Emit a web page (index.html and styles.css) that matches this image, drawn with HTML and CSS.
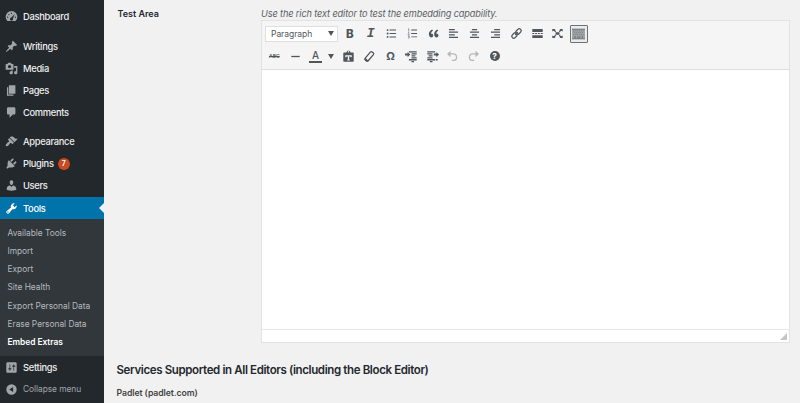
FILE: index.html
```html
<!DOCTYPE html>
<html lang="en">
<head>
<meta charset="utf-8">
<title>Embed Extras</title>
<link rel="stylesheet" href="styles.css">
</head>
<body>
<div class="layout">
<nav class="sidebar">
  <a class="item"><svg viewBox="0 0 20 20"><path fill-rule="evenodd" d="M3.8 17h12.4A9 9 0 1 0 3.8 17zM10 4a1 1 0 1 1 0 2 1 1 0 0 1 0-2zM6 6a1 1 0 1 1 0 2 1 1 0 0 1 0-2zm9 0-2.8 7.1a2.3 2.3 0 1 1-2.4-1.4zM4 10a1 1 0 1 1 0 2 1 1 0 0 1 0-2zm12 0a1 1 0 1 1 0 2 1 1 0 0 1 0-2z"/></svg><span>Dashboard</span></a>
  <a class="item gap"><svg viewBox="0 0 20 20"><path d="M10.44 3.02l1.82-1.82 6.36 6.35-1.83 1.82c-1.05-.68-2.48-.57-3.41.36l-.75.75c-.92.93-1.04 2.35-.35 3.41l-1.83 1.82-2.41-2.41-2.8 2.79c-.42.42-3.38 2.71-3.8 2.29s1.86-3.39 2.28-3.81l2.79-2.79L4.1 9.36l1.83-1.82c1.05.69 2.48.57 3.4-.36l.75-.75c.93-.92 1.05-2.35.36-3.41z"/></svg><span>Writings</span></a>
  <a class="item"><svg viewBox="0 0 20 20"><path d="M13 11V4c0-.55-.45-1-1-1h-1.67L9 1H5L3.67 3H2c-.55 0-1 .45-1 1v7c0 .55.45 1 1 1h10c.55 0 1-.45 1-1zM7 4.5c1.38 0 2.5 1.12 2.5 2.5S8.38 9.5 7 9.5 4.5 8.38 4.5 7 5.62 4.5 7 4.5zM14 6h5v10.5c0 1.38-1.12 2.5-2.5 2.5S14 17.88 14 16.5s1.12-2.5 2.5-2.5c.17 0 .34.02.5.05V9h-3V6zm-4 8.05V13h2v3.5c0 1.38-1.12 2.5-2.5 2.5S7 17.88 7 16.5 8.12 14 9.5 14c.17 0 .34.02.5.05z" fill-rule="evenodd"/></svg><span>Media</span></a>
  <a class="item"><svg viewBox="0 0 20 20"><path d="M6 15V2h10v13H6zm-1 1h8v2H3V5h2v11z"/></svg><span>Pages</span></a>
  <a class="item"><svg viewBox="0 0 20 20"><path d="M5 2h9c1.1 0 2 .9 2 2v7c0 1.1-.9 2-2 2h-2l-5 5v-5H5c-1.1 0-2-.9-2-2V4c0-1.1.9-2 2-2z"/></svg><span>Comments</span></a>
  <a class="item gap"><svg viewBox="0 0 20 20"><path d="M14.48 11.06L7.41 3.99l1.5-1.5c.5-.56 2.3-.47 3.51.32 1.21.8 1.43 1.28 2.91 2.1 1.18.64 2.45 1.26 4.45.85zm-.71.71L6.7 4.7 4.93 6.47c-.39.39-.39 1.02 0 1.41l1.06 1.06c.39.39.39 1.03 0 1.42-.6.6-1.43 1.11-2.21 1.69-.35.26-.7.53-1.01.84C1.43 14.23.4 16.08 1.4 17.07c.99 1 2.84-.03 4.18-1.36.31-.31.58-.66.85-1.02.57-.78 1.08-1.61 1.69-2.21.39-.39 1.02-.39 1.41 0l1.06 1.06c.39.39 1.02.39 1.41 0z"/></svg><span>Appearance</span></a>
  <a class="item"><svg viewBox="0 0 20 20"><path d="M13.11 4.36L9.87 7.6 8 5.73l3.24-3.24c.35-.34 1.05-.2 1.56.32.52.51.66 1.21.31 1.55zm-8 1.77l.91-1.12 9.01 9.01-1.19.84c-.71.71-2.63 1.16-3.82 1.16H6.14L4.9 17.26c-.59.59-1.54.59-2.12 0-.59-.58-.59-1.53 0-2.12l1.24-1.24v-3.88c0-1.13.4-3.19 1.09-3.89zm7.26 3.97l3.24-3.24c.34-.35 1.04-.21 1.55.31.52.51.66 1.21.31 1.55l-3.24 3.25z"/></svg><span>Plugins</span><b class="badge">7</b></a>
  <a class="item"><svg viewBox="0 0 20 20"><path d="M10 9.25c-2.27 0-2.73-3.44-2.73-3.44C7 4.02 7.82 2 9.97 2c2.16 0 2.98 2.02 2.71 3.81 0 0-.41 3.44-2.68 3.44zm0 2.57L12.72 10c2.39 0 4.52 2.33 4.52 4.53v2.49s-3.65 1.13-7.24 1.13c-3.65 0-7.24-1.13-7.24-1.13v-2.49c0-2.25 1.94-4.48 4.47-4.48z"/></svg><span>Users</span></a>
  <a class="item active"><svg viewBox="0 0 20 20"><path fill-rule="evenodd" d="M16.68 9.77c-1.34 1.34-3.3 1.67-4.95.99l-5.41 6.52c-.99.99-2.59.99-3.58 0s-.99-2.59 0-3.57l6.52-5.42c-.68-1.65-.35-3.61.99-4.95 1.28-1.28 3.12-1.62 4.72-1.06l-2.89 2.89 2.82 2.82 2.86-2.87c.53 1.58.18 3.39-1.08 4.65zM3.81 16.21c.4.39 1.04.39 1.43 0 .4-.4.4-1.04 0-1.43-.39-.4-1.03-.4-1.43 0-.39.39-.39 1.03 0 1.43z"/></svg><span>Tools</span></a>
  <div class="submenu">
    <a>Available Tools</a><a>Import</a><a>Export</a><a>Site Health</a><a>Export Personal Data</a><a>Erase Personal Data</a><a class="current">Embed Extras</a>
  </div>
  <a class="item"><svg viewBox="0 0 20 20"><path fill-rule="evenodd" d="M18 16V4c0-1.1-.9-2-2-2H4c-1.1 0-2 .9-2 2v12c0 1.1.9 2 2 2h12c1.1 0 2-.9 2-2zM8 11h1c.55 0 1 .45 1 1s-.45 1-1 1H8v1.5c0 .28-.22.5-.5.5s-.5-.22-.5-.5V13H6c-.55 0-1-.45-1-1s.45-1 1-1h1V5.500c0-.28.22-.5.5-.5s.5.22.5.5V11zm5-2h-1c-.55 0-1-.45-1-1s.45-1 1-1h1V5.500c0-.28.22-.5.5-.5s.5.22.5.5V7h1c.55 0 1 .45 1 1s-.45 1-1 1h-1v5.500c0 .28-.22.5-.5.5s-.5-.22-.5-.5V9z"/></svg><span>Settings</span></a>
  <a class="item collapse"><svg viewBox="0 0 20 20"><path fill-rule="evenodd" d="M10 2a8 8 0 1 1 0 16 8 8 0 0 1 0-16zm2.500 4L6.500 10l6 4z"/></svg><span>Collapse menu</span></a>
</nav>
<main class="content">
  <section class="field">
    <h4 class="label">Test Area</h4>
    <div class="control">
      <p class="hint">Use the rich text editor to test the embedding capability.</p>
      <div class="editor">
        <div class="toolbar">
          <div class="tools">
            <div class="select"><span>Paragraph</span><i class="caret"></i></div>
            <span class="btn bold">B</span>
            <span class="btn italic">I</span>
            <span class="btn"><svg viewBox="0 0 20 20"><path d="M7 4h10v1.500H7zM7 9.200h10v1.500H7zM7 14.500h10V16H7z"/><circle cx="4" cy="4.800" r="1.500"/><circle cx="4" cy="10" r="1.500"/><circle cx="4" cy="15.200" r="1.500"/></svg></span>
            <span class="btn"><svg viewBox="0 0 20 20"><path d="M8 4h9v1.300H8zM8 9.300h9v1.300H8zM8 14.600h9v1.300H8z"/><path class="line thin" d="M3 3.500l1.300-.8V7M3 9c1-1.200 2.500-.2 1.500 1L3 12h2.500M3 14h2.200L4 15.400c2 0 1.600 2.300-1 1.700"/></svg></span>
            <span class="btn"><svg viewBox="0 0 20 20"><path d="M9.490 13.220c0-.74-.2-1.380-.61-1.900-.62-.78-1.830-.88-2.530-.72-.29-1.650 1.110-3.750 2.920-4.650L7.880 4c-2.730 1.300-5.420 4.280-4.960 8.050C3.210 14.430 4.590 16 6.540 16c.85 0 1.560-.25 2.120-.75s.83-1.180.83-2.030zm8.050 0c0-.74-.2-1.380-.61-1.900-.63-.78-1.830-.88-2.530-.72-.29-1.650 1.110-3.750 2.920-4.650L15.930 4c-2.730 1.300-5.410 4.280-4.950 8.050.29 2.380 1.660 3.950 3.610 3.950.85 0 1.560-.25 2.120-.75s.83-1.180.83-2.030z"/></svg></span>
            <span class="btn"><svg viewBox="0 0 20 20"><path d="M3 3h9v2H3zM3 7h14v2H3zM3 11h9v2H3zM3 15h14v2H3z"/></svg></span>
            <span class="btn"><svg viewBox="0 0 20 20"><path d="M6 3h8v2H6zM3 7h14v2H3zM6 11h8v2H6zM3 15h14v2H3z"/></svg></span>
            <span class="btn"><svg viewBox="0 0 20 20"><path d="M8 3h9v2H8zM3 7h14v2H3zM8 11h9v2H8zM3 15h14v2H3z"/></svg></span>
            <span class="btn"><svg viewBox="0 0 20 20"><g class="line" transform="rotate(-45 10 10)"><rect x="1" y="7" width="9.500" height="6" rx="3"/><rect x="9.500" y="7" width="9.500" height="6" rx="3"/><path d="M7 10h6"/></g></svg></span>
            <span class="btn"><svg viewBox="0 0 20 20"><path d="M2 3h16v4.500H2zM2 12.500h16V17H2zM2 9.200h3v1.600H2zM6.300 9.200h3v1.600h-3zM10.600 9.200h3v1.600h-3zM15 9.200h3v1.600h-3z"/></svg></span>
            <span class="btn"><svg viewBox="0 0 20 20"><path d="M7 8h6v4H7z"/><path d="M2 3h5L5.700 4.300 8 6.600 6.600 8 4.300 5.700 2 7zM18 3h-5l1.300 1.300L12 6.600 13.400 8l2.300-2.300L18 7zM2 17h5l-1.300-1.300L8 13.400 6.600 12l-2.300 2.300L2 13zM18 17h-5l1.300-1.300-2.300-2.300 1.400-1.400 2.300 2.300L18 13z"/></svg></span>
            <span class="btn pressed"><svg viewBox="0 0 20 18"><path class="keys" d="M0 1h20v16H0z"/><path class="dots" d="M2 4h16M3 7h15M2 10h16"/><path class="edge" d="M0 1h20v1.500H0zM0 15.500h20V17H0zM3 12.500h3V15H3zM8 13h5v2H8zM15 11.500h2V15h-2z"/></svg></span>
          </div>
          <div class="tools second">
            <span class="btn abc">ABC</span>
            <span class="btn"><svg viewBox="0 0 20 20"><path d="M3.500 9h13v2h-13z"/></svg></span>
            <span class="btn color"><span class="letter">A</span><i class="caret"></i></span>
            <span class="btn"><svg viewBox="0 0 20 20"><path fill-rule="evenodd" d="M7 4V3l1.500-2h3L13 3v1h4q1 0 1 1v12q0 1-1 1H3q-1 0-1-1V5q0-1 1-1zm3-2.300a1 1 0 1 0 0 2 1 1 0 0 0 0-2zM5 8v3h1.500l.5-1h2v4.500l-1 .5v1h4v-1l-1-.5V10h2l.5 1H15V8z"/></svg></span>
            <span class="btn"><svg viewBox="0 0 20 20"><path class="line" d="M3.500 12.500l8-9.500q1.200-1 2.500 0l2 1.700q1 1 0 2.300l-8 9.500H5.500L3.200 14.700q-.7-1 .3-2.200z"/><path d="M3.500 12l5 4.500-1 1.500H5l-2.500-2.500V13z"/></svg></span>
            <span class="btn omega">Ω</span>
            <span class="btn"><svg viewBox="0 0 20 20"><path d="M6 2h12v2H6zM10 5h8v2h-8zM10 8h6v2h-6zM10 11h8v2h-8zM6 14h12v2H6zM10 17h4v2h-4zM0 5.500h4V3l4 4-4 4V8.500H0z"/></svg></span>
            <span class="btn"><svg viewBox="0 0 20 20"><path d="M2 2h12v2H2zM2 5h8v2H2zM4 8h6v2H4zM2 11h8v2H2zM2 14h12v2H2zM6 17h4v2H6zM12 5.500h4V3l4 4-4 4V8.500h-4zM15 14h3v2h-3z"/></svg></span>
            <span class="btn off"><svg viewBox="0 0 20 20"><path class="line" d="M4 6h7c7 0 7 10 0 10H9"/><path d="M7 1v10L1.500 6z"/></svg></span>
            <span class="btn off"><svg viewBox="0 0 20 20"><path class="line" d="M16 6H9C2 6 2 16 9 16h2"/><path d="M13 1v10l5.500-5z"/></svg></span>
            <span class="btn"><span class="help">?</span></span>
          </div>
        </div>
        <div class="canvas"></div>
        <div class="status"><svg class="grip" viewBox="0 0 7 7"><path d="M7 0v7H0z"/></svg></div>
      </div>
    </div>
  </section>
  <h2>Services Supported in All Editors (including the Block Editor)</h2>
  <h3>Padlet (padlet.com)</h3>
</main>
</div>
</body>
</html>
```
FILE: styles.css
```css
* { box-sizing: border-box; }
body {
  margin: 0;
  background: #f1f1f1;
  font-family: Inter, "Liberation Sans", sans-serif;
  color: #23282d;
}
h2, h3, h4, p { margin: 0; }
svg { display: block; fill: currentColor; }
.layout { display: flex; height: 403px; overflow: hidden; }

.sidebar {
  width: 103.500px;
  flex: none;
  padding-top: 5.500px;
  background: #23282d;
}
.item {
  position: relative;
  display: flex;
  align-items: center;
  height: 22.100px;
  padding-left: 5px;
  font-size: 9.300px;
  font-weight: 500;
  letter-spacing: -.28px;
  color: #eee;
}
.item svg { width: 13px; height: 13px; margin-right: 5px; color: #a0a5aa; }
.item.gap { margin-top: 7.400px; }
.badge {
  width: 12px;
  height: 12px;
  margin-left: 4px;
  border-radius: 50%;
  background: #ca4a1f;
  color: #fff;
  font-size: 7px;
  font-weight: 600;
  line-height: 12px;
  letter-spacing: 0;
  text-align: center;
}
.item.active { background: #0073aa; color: #fff; }
.item.active svg { color: #fff; }
.item.active::after {
  content: "";
  position: absolute;
  right: 0;
  top: 5.500px;
  border: solid transparent;
  border-width: 5.500px 5.500px 5.500px 0;
  border-right-color: #f1f1f1;
}
.submenu {
  height: 137px;
  padding: 4.700px 0 0 7.500px;
  background: #32373c;
}
.submenu a {
  display: block;
  height: 18.200px;
  font-size: 8.400px;
  line-height: 18.200px;
  letter-spacing: -.03px;
  color: #b4b9be;
  white-space: nowrap;
}
.submenu .current { color: #fff; font-weight: 600; }
.item.collapse { color: #a0a5aa; font-size: 8.400px; font-weight: 400; letter-spacing: -.05px; }

.content { flex: 1; padding-left: 13px; }
.field { display: flex; height: 343px; padding-left: 1px; }
.label { width: 143.500px; padding-top: 8px; font-size: 9px; line-height: 12px; font-weight: 600; }
.control { padding-top: 8px; }
.hint { height: 12px; font-size: 9.200px; line-height: 12px; letter-spacing: -.13px; font-style: italic; color: #5b5f63; white-space: nowrap; }
.editor {
  display: flex;
  flex-direction: column;
  width: 529px;
  height: 323px;
  border: 1px solid #e2e3e4;
  background: #fff;
}
.toolbar { height: 49px; padding: 2px 0 0 2px; background: #f5f5f5; border-bottom: 1px solid #dcdddd; }
.tools { display: flex; align-items: center; height: 21px; }
.tools.second { height: 24px; }
.select {
  display: flex;
  align-items: center;
  justify-content: space-between;
  width: 73px;
  height: 16px;
  margin: 0 1.500px 0 1px;
  padding: 0 3px 0 5px;
  border: 1px solid #dedede;
  background: #fff;
  font-size: 8.500px;
  letter-spacing: -.05px;
  color: #50565c;
}
.caret { border: solid transparent; border-width: 5px 3px 0; border-top-color: #50565c; }
.btn {
  display: flex;
  align-items: center;
  justify-content: center;
  flex: none;
  width: 20.800px;
  height: 18px;
  color: #50565c;
}
.btn svg { width: 13px; height: 13px; }
.line { fill: none; stroke: currentColor; stroke-width: 2; }
.thin { stroke-width: .9; }
.bold { font-size: 11.500px; font-weight: 800; }
.italic { font: italic bold 13px "Liberation Mono", monospace; }
.pressed { width: 18px; margin-left: 1.400px; border: 1px solid #6c7176; border-radius: 1px; background: #ebebeb; }
.pressed svg { height: 12px; }
.keys { fill: #a2a5a8; }
.edge { fill: #777c80; }
.dots { fill: none; stroke: #6f7478; stroke-width: 1.300; stroke-dasharray: 1.500 1.500; }
.abc { font-size: 5px; font-weight: 600; text-decoration: line-through; }
.color { width: 33px; justify-content: flex-start; gap: 6px; padding-left: 3.500px; }
.letter { width: 13px; height: 13px; border-bottom: 2px solid #50565c; font-size: 10px; line-height: 11px; font-weight: 500; text-align: center; }
.omega { font-size: 11px; font-weight: 700; }
.off { color: #b5b8ba; }
.help { width: 10px; height: 10px; border-radius: 50%; background: #50565c; color: #fff; font-size: 8px; line-height: 10px; font-weight: 800; text-align: center; }
.canvas { flex: 1; }
.status { display: flex; align-items: flex-end; justify-content: flex-end; height: 13px; padding: 0 2px 2px; border-top: 1px solid #e8e8e8; }
.grip { width: 7px; height: 7px; color: #c5c5c5; }

h2 { margin-top: 19px; font-size: 11.500px; line-height: 17px; font-weight: 600; letter-spacing: -.37px; white-space: nowrap; }
h3 { margin-top: 8px; font-size: 8.700px; line-height: 12px; font-weight: 600; letter-spacing: -.07px; color: #444; }
```
